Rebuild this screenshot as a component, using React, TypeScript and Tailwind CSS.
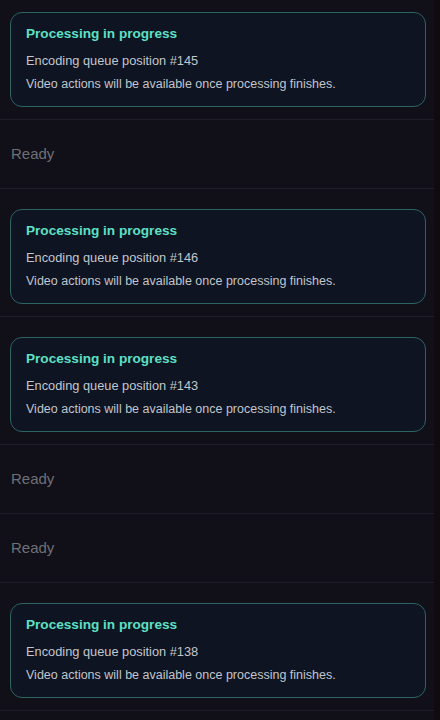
import React from "react";

type Item = { kind: "processing"; position: number } | { kind: "ready" };

const items: Item[] = [
  { kind: "processing", position: 145 },
  { kind: "ready" },
  { kind: "processing", position: 146 },
  { kind: "processing", position: 143 },
  { kind: "ready" },
  { kind: "ready" },
  { kind: "processing", position: 138 },
];

const ProcessingCard = ({ position }: { position: number }) => (
  <div className="rounded-xl border border-[#2c6462] bg-[#0e1421] px-[15px] pt-[11px] pb-[13px]">
    <p className="text-[13.6px] leading-5 font-bold text-[#5ee0c4]">Processing in progress</p>
    <p className="mt-[7px] text-[12.8px] leading-5 text-[#c3c6cd]">Encoding queue position #{position}</p>
    <p className="mt-1 text-[12.5px] leading-[18px] font-medium text-[#c2c5cc]">
      Video actions will be available once processing finishes.
    </p>
  </div>
);

export default function App() {
  return (
    <div
      className="flex h-[720px] w-[440px] overflow-hidden bg-[#0f0b0e]"
      style={{ fontFamily: '"Liberation Sans", Arial, sans-serif' }}
    >
      <div className="w-[434px] shrink-0 bg-[#110f17]">
        <div className="-mt-[8px]">
          {items.map((item, i) =>
            item.kind === "processing" ? (
              <div key={i} className="border-b border-[#1f1d27] pl-2.5 pr-2 pt-5 pb-3">
                <ProcessingCard position={item.position} />
              </div>
            ) : (
              <div key={i} className="border-b border-[#1f1d27] px-[11px] py-[23px]">
                <p className="text-[15px] leading-[22px] text-[#6e6f78]">Ready</p>
              </div>
            )
          )}
        </div>
      </div>
    </div>
  );
}
